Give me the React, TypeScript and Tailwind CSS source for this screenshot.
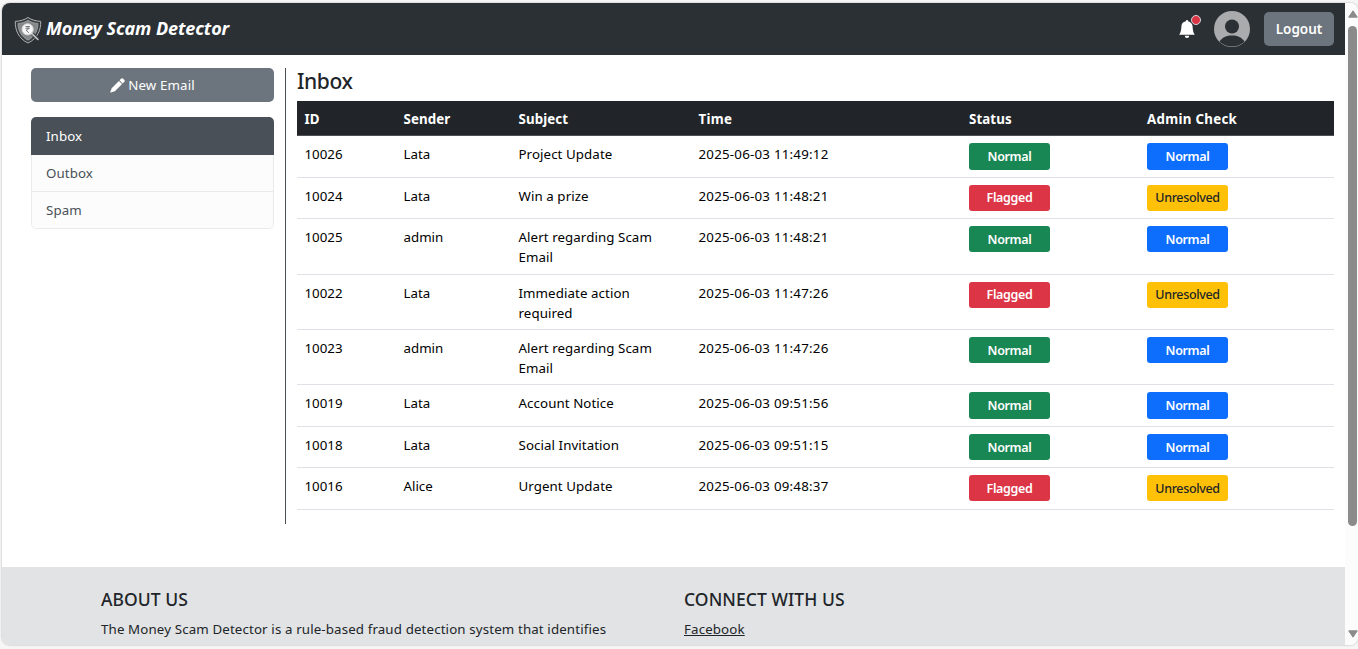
import React from "react";

type Status = "Normal" | "Flagged";
type Check = "Normal" | "Unresolved";

interface Email {
  id: string;
  sender: string;
  subject: string;
  time: string;
  status: Status;
  check: Check;
  row: string;
  badge: string;
}

const emails: Email[] = [
  { id: "10026", sender: "Lata", subject: "Project Update", time: "2025-06-03 11:49:12", status: "Normal", check: "Normal", row: "h-[42px]", badge: "h-[27px] pt-px" },
  { id: "10024", sender: "Lata", subject: "Win a prize", time: "2025-06-03 11:48:21", status: "Flagged", check: "Unresolved", row: "h-[41px]", badge: "h-[26px]" },
  { id: "10025", sender: "admin", subject: "Alert regarding Scam Email", time: "2025-06-03 11:48:21", status: "Normal", check: "Normal", row: "h-[56px]", badge: "h-[26px] pt-[2px]" },
  { id: "10022", sender: "Lata", subject: "Immediate action required", time: "2025-06-03 11:47:26", status: "Flagged", check: "Unresolved", row: "h-[55px]", badge: "h-[26px]" },
  { id: "10023", sender: "admin", subject: "Alert regarding Scam Email", time: "2025-06-03 11:47:26", status: "Normal", check: "Normal", row: "h-[55px]", badge: "h-[26px] pt-[2px]" },
  { id: "10019", sender: "Lata", subject: "Account Notice", time: "2025-06-03 09:51:56", status: "Normal", check: "Normal", row: "h-[42px]", badge: "h-[27px] pt-px" },
  { id: "10018", sender: "Lata", subject: "Social Invitation", time: "2025-06-03 09:51:15", status: "Normal", check: "Normal", row: "h-[41px]", badge: "h-[26px] pt-[2px]" },
  { id: "10016", sender: "Alice", subject: "Urgent Update", time: "2025-06-03 09:48:37", status: "Flagged", check: "Unresolved", row: "h-[42px]", badge: "h-[26px] pt-[2px]" },
];

const columns = "grid grid-cols-[99px_115px_180px_270.5px_178px_1fr]";

function Logo() {
  return (
    <svg className="mt-[2px] h-[28px] w-[28px] shrink-0" viewBox="0 0 28 28" fill="none">
      <path d="M14 1.500C10.500 3.900 6 5.200 1.300 5.400 1 14 4.500 22.600 14 27 23.500 22.600 27 14 26.700 5.400 22 5.200 17.500 3.900 14 1.500Z" fill="#34393d" stroke="#b1b3b4" strokeWidth="1" />
      <path d="M14 4.200C11 6.200 7.500 7.200 4 7.500 4.100 14.500 7 20.500 14 24.200 21 20.500 23.900 14.500 24 7.500 20.500 7.200 17 6.200 14 4.200Z" fill="#85888a" stroke="#a5a7a8" strokeWidth=".8" />
      <path d="m18.500 18 5 5" stroke="#3b4043" strokeWidth="3.600" />
      <path d="m17.500 17.300 6.500 6.200" stroke="#c4c6c7" strokeWidth="1.600" strokeLinecap="round" />
      <circle cx="13.600" cy="13.300" r="5.600" fill="#f6f6f6" stroke="#d5d6d6" />
      <path d="M11.500 10.500h4.300M11.500 12.300h4.300M12 10.500c3.300 0 3.300 3.600 0 3.600l2.800 2.700" stroke="#777a7c" strokeWidth="1" />
    </svg>
  );
}

function Header() {
  return (
    <header className="flex h-[52px] shrink-0 items-center bg-[#2b3035] pl-[12px] pr-[11px] text-white">
      <Logo />
      <span className="-mt-[2px] ml-[4px] whitespace-nowrap text-[18px] leading-[24px] font-bold italic tracking-[-0.08px]">Money Scam Detector</span>
      <div className="ml-auto flex items-center">
        <div className="relative mr-[18px] h-[20px] w-[18px]">
          <svg className="mt-px h-[18px] w-[18px]" viewBox="0 0 16 16" fill="currentColor">
            <path d="M8 16a2 2 0 0 0 2-2H6a2 2 0 0 0 2 2m.995-14.901a1 1 0 1 0-1.990 0A5 5 0 0 0 3 6c0 1.098-.5 6-2 7h14c-1.500-1-2-5.902-2-7 0-2.420-1.720-4.440-4.005-4.901" />
          </svg>
          <span className="absolute -top-[4px] right-[-5px] h-[10px] w-[10px] rounded-full border border-[#d5d7d8] bg-[#dc3545]" />
        </div>
        <svg className="h-[36px] w-[36px]" viewBox="0 0 36 36">
          <circle cx="18" cy="18" r="18" fill="#a9abad" />
          <circle cx="18" cy="15.500" r="7" fill="#2b3035" />
          <path d="M5.500 30.800C8 26.500 12.500 24.600 18 24.600s10 1.900 12.500 6.200C27 34 23 35.600 18 35.600S9 34 5.500 30.800Z" fill="#2b3035" />
        </svg>
        <button className="ml-[14px] h-[34px] w-[70px] rounded-[5px] bg-[#6c757d] pt-px text-[13.500px] font-semibold">Logout</button>
      </div>
    </header>
  );
}

function Sidebar() {
  return (
    <aside className="w-[243px] shrink-0 text-[13.300px] tracking-[0.1px]">
      <button className="flex h-[34px] w-full items-center justify-center gap-[3px] rounded-[5px] bg-[#6c757d] tracking-[0.150px] text-white">
        <svg className="h-[15px] w-[15px]" viewBox="0 0 16 16" fill="currentColor">
          <path d="M11.700.9a1.700 1.700 0 0 1 2.400 0l1 1a1.700 1.700 0 0 1 0 2.400L13.600 5.800 10.200 2.400ZM9.500 3.100l3.400 3.400-7.700 7.700L.8 15.500a.4.400 0 0 1-.5-.5l1.500-4.200Z" />
        </svg>
        <span className="pt-px">New Email</span>
      </button>
      <nav className="mt-[15px] overflow-hidden rounded-[5px] bg-[#fcfcfd] text-[#495057]">
        <a className="flex h-[38px] items-center bg-[#495057] px-[15px] pt-px text-white">Inbox</a>
        <a className="flex h-[37px] items-center border-x border-b border-[#e9eaeb] px-[14px] pt-[2px]">Outbox</a>
        <a className="flex h-[37px] items-center rounded-b-[5px] border-x border-b border-[#e9eaeb] px-[14px] pt-[2px]">Spam</a>
      </nav>
    </aside>
  );
}

function Badge({ label, kind, box }: { label: string; kind: "status" | "check"; box: string }) {
  const color =
    label === "Flagged"
      ? "bg-[#dc3545] font-semibold text-white"
      : label === "Unresolved"
        ? "bg-[#ffc107] text-[#212529] font-medium"
        : kind === "status"
          ? "bg-[#198754] font-semibold text-white"
          : "bg-[#0d6efd] font-semibold text-white";
  return <span className={`flex w-[81px] items-center justify-center rounded-[3px] text-[12.500px] tracking-[-0.35px] ${box} ${color}`}>{label}</span>;
}

function Inbox() {
  return (
    <section className="w-[1037px]">
      <h1 className="h-[33px] text-[21px] leading-[27px] font-medium tracking-[-0.4px] text-[#212529]">Inbox</h1>
      <div className={`${columns} h-[35px] border-b border-[#4d5154] bg-[#212529] pl-[7.500px] text-[13.300px] leading-[37px] font-bold tracking-[0.1px] text-white`}>
        <span>ID</span>
        <span>Sender</span>
        <span>Subject</span>
        <span className="tracking-[0.3px]">Time</span>
        <span>Status</span>
        <span className="tracking-[0.3px]">Admin Check</span>
      </div>
      {emails.map((e) => (
        <div key={e.id} className={`${columns} ${e.row} items-start border-b border-[#dee2e6] pt-[7px] pl-[7.500px] text-[13.300px] leading-[20px] text-black`}>
          <span className="mt-px">{e.id}</span>
          <span className="mt-px">{e.sender}</span>
          <span className="mt-px pr-[16px] tracking-[0.08px]">{e.subject}</span>
          <span className="mt-px tracking-[0.230px]">{e.time}</span>
          <Badge label={e.status} kind="status" box={e.badge} />
          <Badge label={e.check} kind="check" box={e.badge} />
        </div>
      ))}
    </section>
  );
}

function Footer() {
  return (
    <footer className="flex h-[78px] shrink-0 bg-[#e1e3e5] pt-[20px] pl-[99px] text-[#212529]">
      <div className="w-[583px]">
        <h2 className="text-[17.500px] leading-[25px] font-medium tracking-[0.05px]">ABOUT US</h2>
        <p className="mt-[7px] text-[13.300px] leading-[20px] tracking-[0.135px] whitespace-nowrap">The Money Scam Detector is a rule-based fraud detection system that identifies</p>
      </div>
      <div>
        <h2 className="text-[17.500px] leading-[25px] font-medium tracking-[0.08px]">CONNECT WITH US</h2>
        <a className="mt-[7px] block text-[13.300px] leading-[20px] tracking-[0.135px] underline">Facebook</a>
      </div>
    </footer>
  );
}

function Scrollbar() {
  return (
    <div className="flex w-[13px] shrink-0 flex-col items-center bg-[#fcfcfc] pl-[2px]">
      <svg className="mt-[7px] h-[8px] w-[10px]" viewBox="0 0 10 8"><path d="M5 .8 9.300 7.200H.7Z" fill="#8b8b8b" stroke="#8b8b8b" strokeLinejoin="round" /></svg>
      <div className="mt-[8px] h-[500px] w-[9px] rounded-full bg-[#8b8b8b]" />
      <svg className="mt-auto mb-[7px] h-[8px] w-[10px]" viewBox="0 0 10 8"><path d="M5 7.200 9.300.8H.7Z" fill="#8b8b8b" stroke="#8b8b8b" strokeLinejoin="round" /></svg>
    </div>
  );
}

export default function App() {
  return (
    <div className="h-[649px] w-[1358px] overflow-hidden bg-[#f6f6f6] pt-[3px] pl-[2px] font-['Noto_Sans','Open_Sans',sans-serif]">
      <div className="flex h-[642px] w-[1356px] overflow-hidden rounded-[8px] bg-white shadow-[0_0_2px_rgba(0,0,0,0.35)]">
        <div className="flex w-[1343px] shrink-0 flex-col">
          <Header />
          <main className="flex min-h-0 flex-1 pt-[13px] pl-[29px]">
            <Sidebar />
            <div className="ml-[11px] mr-[11px] h-[456px] w-px shrink-0 bg-[#495057]" />
            <Inbox />
          </main>
          <Footer />
        </div>
        <Scrollbar />
      </div>
    </div>
  );
}
